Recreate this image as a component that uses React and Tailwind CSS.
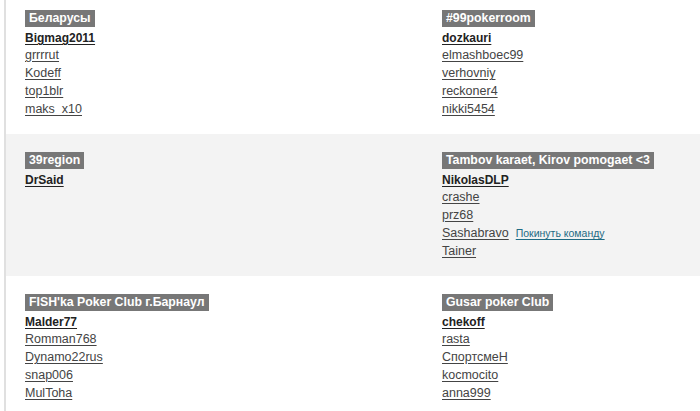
import React from "react";

const rows = [
  {
    bg: "bg-white",
    pt: "pt-[10px]",
    teams: [
      { name: "Беларусы", captain: "Bigmag2011", members: ["grrrrut", "Kodeff", "top1blr", "maks_x10"] },
      { name: "#99pokerroom", captain: "dozkauri", members: ["elmashboec99", "verhovniy", "reckoner4", "nikki5454"] },
    ],
  },
  {
    bg: "bg-[#f3f3f3]",
    pt: "pt-[18px]",
    teams: [
      { name: "39region", captain: "DrSaid", members: [] },
      { name: "Tambov karaet, Kirov pomogaet <3", captain: "NikolasDLP", members: ["crashe", "prz68", "Sashabravo", "Tainer"], leave: "Sashabravo" },
    ],
  },
  {
    bg: "bg-white",
    pt: "pt-[18px]",
    teams: [
      { name: "FISH'ka Poker Club г.Барнаул", captain: "Malder77", members: ["Romman768", "Dynamo22rus", "snap006", "MulToha"] },
      { name: "Gusar poker Club", captain: "chekoff", members: ["rasta", "СпортсмеН", "kocmocito", "anna999"] },
    ],
  },
];

function Team({ team }) {
  return (
    <div className="pl-[19px]">
      <div className="flex">
        <span className="bg-[#777777] text-white font-bold text-[12.3px] leading-[17px] h-[17px] px-[4px] whitespace-nowrap">
          {team.name}
        </span>
      </div>
      <div className="mt-[1px]">
        <div className="leading-[18px] h-[18px]">
          <a className="font-bold text-[#222222] underline underline-offset-[2px] text-[12px] cursor-pointer">{team.captain}</a>
        </div>
        {team.members.map((m) => (
          <div key={m} className="leading-[18px] h-[18px] flex items-baseline whitespace-nowrap">
            <a className="text-[#444444] underline underline-offset-[2px] text-[12.5px] cursor-pointer">{m}</a>
            {team.leave === m && (
              <a className="ml-[7px] text-[10.5px] text-[#1f6b84] underline underline-offset-[2px] cursor-pointer">
                Покинуть команду
              </a>
            )}
          </div>
        ))}
      </div>
    </div>
  );
}

export default function App() {
  return (
    <div
      className="w-[700px] h-[411px] overflow-hidden bg-white"
      style={{ fontFamily: '"Liberation Sans", Arial, sans-serif' }}
    >
      <div className="ml-[4px] border-l-2 border-[#e0e0e0] w-[900px]">
        {rows.map((row, i) => (
          <div key={i} className={`${row.bg} ${row.pt} pb-[16px] grid grid-cols-[417px_417px]`}>
            {row.teams.map((t) => (
              <Team key={t.name} team={t} />
            ))}
          </div>
        ))}
      </div>
    </div>
  );
}
